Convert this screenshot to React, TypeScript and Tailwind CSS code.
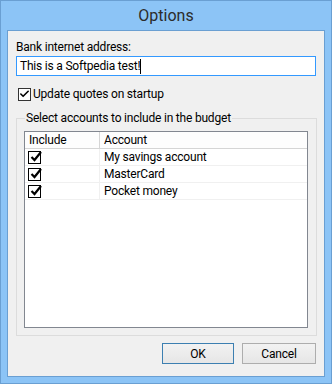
import { Check } from 'lucide-react';

const accounts = ['My savings account', 'MasterCard', 'Pocket money'];

function TickBox() {
  return (
    <span className="relative w-[13px] h-[13px] border border-black bg-white">
      <svg className="absolute left-[1px] top-[-2px]" width="13" height="13" viewBox="0 0 13 13">
        <path d="M1.5 7 L4.5 10 L11 2" stroke="#000" strokeWidth="2.2" fill="none" />
      </svg>
    </span>
  );
}

export default function App() {
  return (
    <div
      className="w-[332px] h-[384px] bg-[#8cc4f6] border border-[#6a9fd2] flex flex-col text-[12px] tracking-[-0.2px] text-black"
      style={{ fontFamily: '"Segoe UI", Roboto, "Noto Sans", sans-serif' }}
    >
      {/* Title bar */}
      <div className="h-[29px] flex items-center justify-center text-[16px] tracking-normal text-[#2b2b2b]">Options</div>

      {/* Client area */}
      <div className="mx-[6px] mb-[6px] flex-1 border border-[#6a9fd2] bg-[#f0f0f0] flex flex-col px-[8px] pt-[8px]">
        <div className="leading-[16px]">Bank internet address:</div>
        <div className="mt-[1px] h-[20px] w-[300px] border border-[#3399ff] bg-white flex items-center px-[3px]">
          <span>This is a Softpedia test!</span>
          <span className="w-px h-[15px] bg-black" />
        </div>

        <label className="mt-[10px] h-[16px] flex items-center gap-[2px] ml-[2px]">
          <span className="w-[13px] h-[13px] border border-[#333] bg-white flex items-center justify-center">
            <Check size={12} strokeWidth={3.5} className="text-black" />
          </span>
          <span className="leading-[16px]">Update quotes on startup</span>
        </label>

        {/* Group box */}
        <div className="relative mt-[16px] h-[218px] w-[301px] border border-[#dcdcdc] px-[7px] pt-[12px]">
          <span className="absolute left-[8px] top-[-9px] bg-[#f0f0f0] px-[1px] leading-[16px]">
            Select accounts to include in the budget
          </span>
          <div className="h-[197px] w-[284px] border border-[#828790] bg-white flex flex-col">
            <div className="flex h-[17px] border-b border-[#d5d5d5] bg-[#fdfdfd]">
              <div className="w-[75px] border-r border-[#d5d5d5] pl-[4px] leading-[16px]">Include</div>
              <div className="flex-1 pl-[4px] leading-[16px]">Account</div>
            </div>
            {accounts.map((a) => (
              <div key={a} className="flex h-[17px] border-b border-[#f0f0f0]">
                <div className="w-[75px] border-r border-[#f0f0f0] pl-[3px] flex items-center">
                  <TickBox />
                </div>
                <div className="flex-1 pl-[4px] leading-[16px]">{a}</div>
              </div>
            ))}
          </div>
        </div>

        {/* Buttons */}
        <div className="mt-[7px] flex justify-end gap-[8px]">
          <button className="w-[72px] h-[21px] border border-[#3c7fb1] bg-gradient-to-b from-[#f2f2f2] to-[#e6e6e6]">OK</button>
          <button className="w-[74px] h-[21px] border border-[#adadad] bg-gradient-to-b from-[#f2f2f2] to-[#e6e6e6]">Cancel</button>
        </div>
      </div>
    </div>
  );
}
